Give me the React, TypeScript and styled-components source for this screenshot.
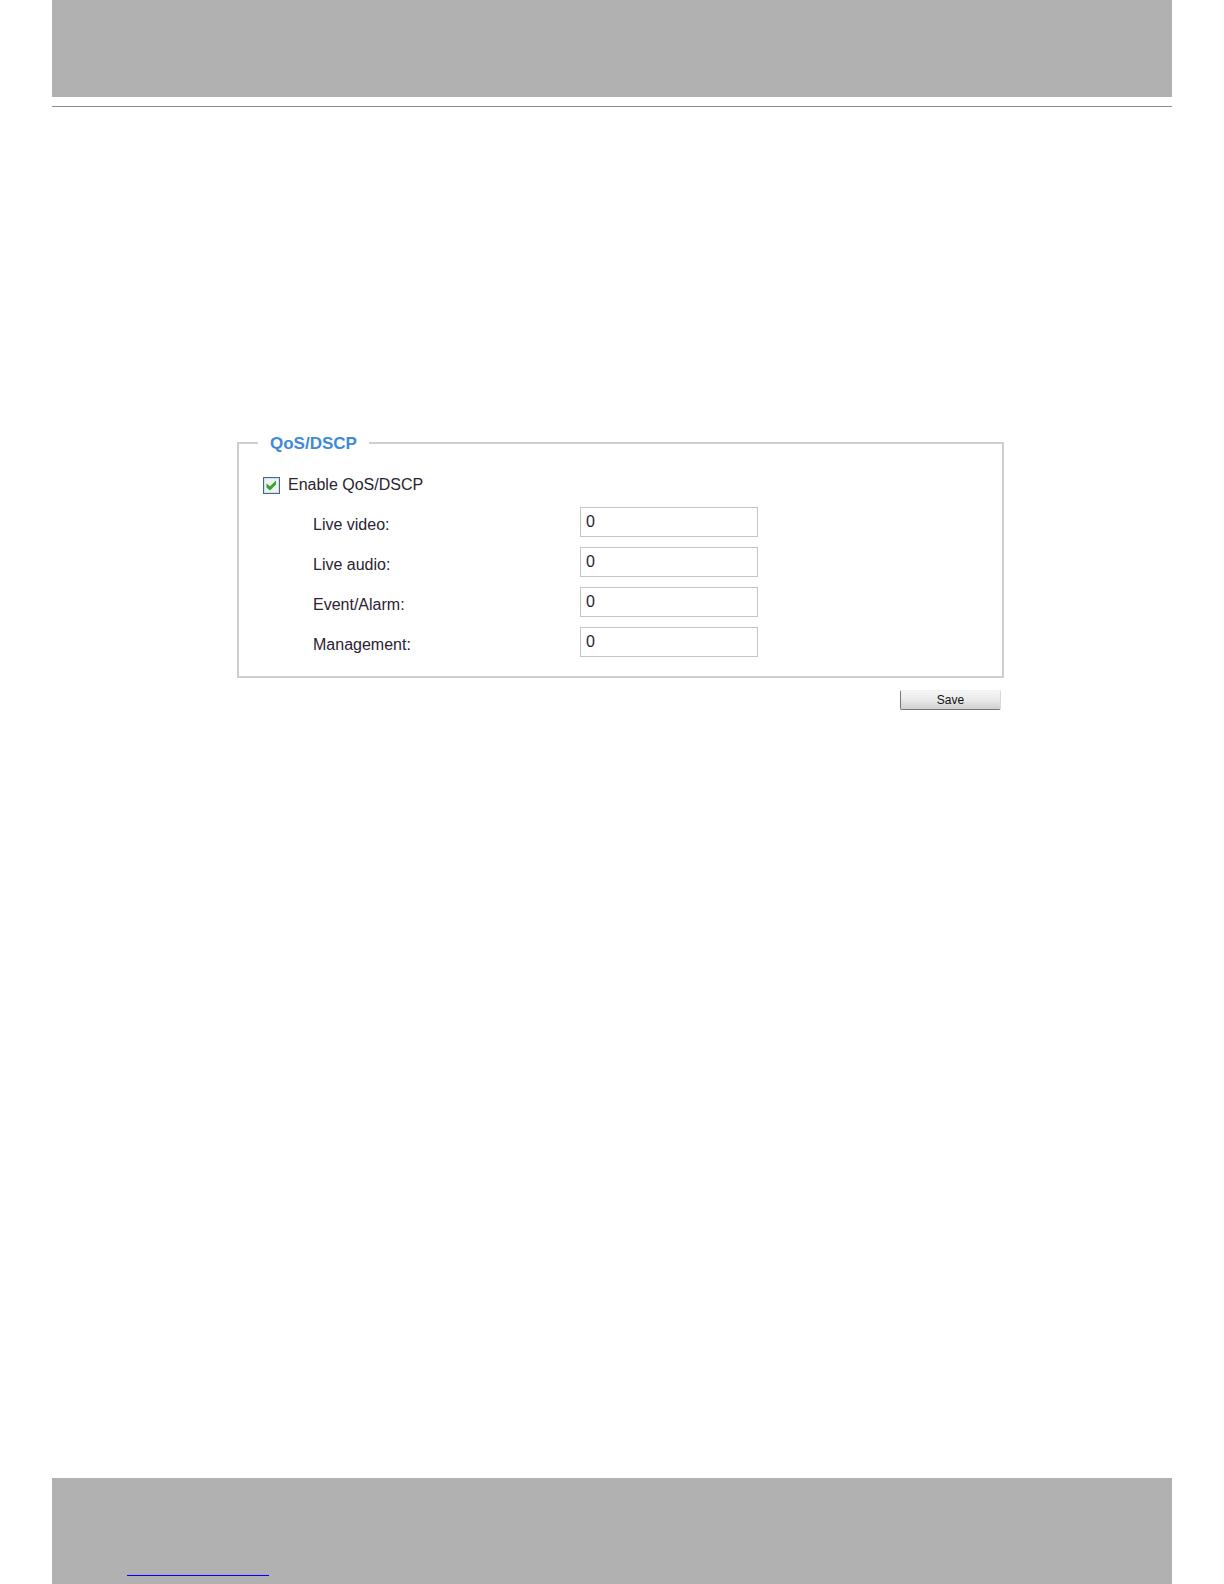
import { useState } from "react";
import styled, { createGlobalStyle } from "styled-components";

const GlobalStyle = createGlobalStyle`
  *, *::before, *::after {
    box-sizing: border-box;
  }
  body {
    margin: 0;
    background: #ffffff;
    color: #2b2233;
    font-family: "Liberation Sans", Arial, Helvetica, sans-serif;
    font-size: 16px;
    line-height: 20px;
  }
`;

const Page = styled.div`
  display: flex;
  flex-direction: column;
  min-height: 100vh;
  padding: 0 52px;
`;

const Header = styled.header`
  border-bottom: 1px solid #8c8c8c;
  padding-bottom: 9px;
`;

const HeaderBand = styled.div`
  height: 97px;
  background: #b1b1b1;
`;

const Main = styled.main`
  flex: 1;
  padding: 325px 168px 40px 185px;
`;

const Footer = styled.footer`
  display: flex;
  align-items: flex-end;
  height: 106px;
  padding: 0 75px 8px;
  background: #b1b1b1;
`;

const FooterLink = styled.a`
  width: 142px;
  height: 16px;
  border-bottom: 1px solid #0a0ac8;
  box-shadow: inset 0 -1px #a0a0ee;
`;

const Form = styled.form`
  display: flex;
  flex-direction: column;
  gap: 12px;
`;

const Group = styled.fieldset`
  margin: 0;
  min-width: 0;
  padding: 0 19px 19px;
  border: 2px solid #cecece;
`;

const GroupTitle = styled.legend`
  padding: 2px 12px 0;
  color: #3f8ad6;
  font-size: 17px;
  font-weight: bold;
`;

const EnableRow = styled.div`
  display: flex;
  align-items: center;
  gap: 8px;
  padding: 21px 5px 12px;
`;

const Checkbox = styled.input`
  appearance: none;
  width: 17px;
  height: 17px;
  margin: 0;
  border: 1px solid #3d6c8e;
  background: #f1f3ee;
  box-shadow: inset 0 0 0 1px #d5dfe4;
`;

const CheckboxBox = styled.span`
  display: grid;

  & > * {
    grid-area: 1 / 1;
  }
`;

const Tick = styled.svg`
  width: 17px;
  height: 17px;
  pointer-events: none;
`;

const Fields = styled.div`
  display: grid;
  gap: 10px;
  padding-left: 55px;
`;

const Field = styled.div`
  display: grid;
  grid-template-columns: 267px 178px;
  align-items: center;
`;

const FieldLabel = styled.label`
  padding-top: 5px;
`;

const TextBox = styled.input`
  width: 100%;
  height: 30px;
  padding: 0 5px;
  border: 1px solid #c3c7cc;
  border-radius: 0;
  outline: 0;
  background: #ffffff;
  color: inherit;
  font: inherit;
`;

const SaveButton = styled.button`
  align-self: flex-end;
  width: 101px;
  height: 20px;
  margin-right: 3px;
  padding: 0;
  border: 1px solid #777777;
  border-top-color: #f2f2f2;
  border-right-color: #d8d8d8;
  border-radius: 2px;
  background: linear-gradient(#f6f6f6, #e9e9e9 50%, #cfcfcf);
  color: #111111;
  font: 12px/16px "Liberation Sans", Arial, sans-serif;
`;

const fields = [
  { id: "live-video", label: "Live video:" },
  { id: "live-audio", label: "Live audio:" },
  { id: "event-alarm", label: "Event/Alarm:" },
  { id: "management", label: "Management:" },
];

export default function App() {
  const [enabled, setEnabled] = useState(true);

  return (
    <>
      <GlobalStyle />
      <Page>
        <Header>
          <HeaderBand />
        </Header>
        <Main>
          <Form onSubmit={(event) => event.preventDefault()}>
            <Group>
              <GroupTitle>QoS/DSCP</GroupTitle>
              <EnableRow>
                <CheckboxBox>
                  <Checkbox
                    id="enable-qos"
                    type="checkbox"
                    checked={enabled}
                    onChange={(event) => setEnabled(event.target.checked)}
                  />
                  {enabled && (
                    <Tick viewBox="0 0 17 17" aria-hidden="true">
                      <path d="M3.5 6.5 L7 9.3 L13 3.5 V7.5 L7 13.5 L3.5 10.5 Z" fill="#35a535" />
                    </Tick>
                  )}
                </CheckboxBox>
                <label htmlFor="enable-qos">Enable QoS/DSCP</label>
              </EnableRow>
              <Fields>
                {fields.map(({ id, label }) => (
                  <Field key={id}>
                    <FieldLabel htmlFor={id}>{label}</FieldLabel>
                    <TextBox id={id} type="text" defaultValue="0" />
                  </Field>
                ))}
              </Fields>
            </Group>
            <SaveButton type="submit">Save</SaveButton>
          </Form>
        </Main>
        <Footer>
          <FooterLink href="#" aria-label="Website" />
        </Footer>
      </Page>
    </>
  );
}
